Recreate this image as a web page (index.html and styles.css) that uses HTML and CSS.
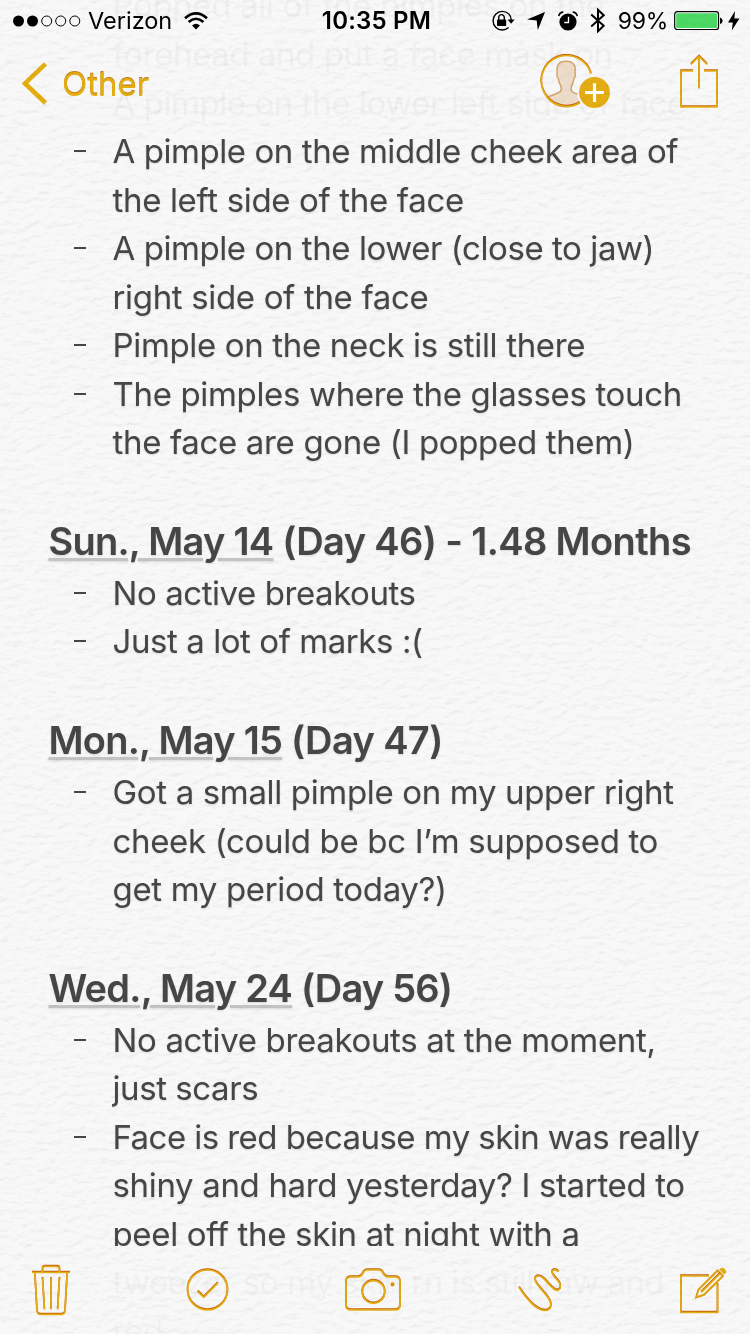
FILE: index.html
```html
<!DOCTYPE html>
<html lang="en">
<head>
    <meta charset="UTF-8">
    <meta name="viewport" content="width=device-width, initial-scale=1.0">
    <title>Notes</title>
    <link rel="stylesheet" href="styles.css">
</head>
<body>
    <div class="screen">
        <!-- Note text, scrolled under the two bars -->
        <main class="note">
            <ul class="list">
                <li class="item plain">
                    <span class="line">Popped all of the pimples on the</span>
                    <span class="line tight">forehead and put a face mask on</span>
                </li>
                <li class="item plain"><span class="line tight">A pimple on the lower left side of face</span></li>
                <li class="item">
                    <span class="line tight">A pimple on the middle cheek area of</span>
                    <span class="line">the left side of the face</span>
                </li>
                <li class="item">
                    <span class="line tight">A pimple on the lower (close to jaw)</span>
                    <span class="line">right side of the face</span>
                </li>
                <li class="item"><span class="line">Pimple on the neck is still there</span></li>
                <li class="item">
                    <span class="line">The pimples where the glasses touch</span>
                    <span class="line">the face are gone (I popped them)</span>
                </li>
            </ul>

            <h2 class="day"><span class="date">Sun., May 14</span> (Day 46) - 1.48 Months</h2>
            <ul class="list">
                <li class="item"><span class="line tight">No active breakouts</span></li>
                <li class="item"><span class="line tight">Just a lot of marks :(</span></li>
            </ul>

            <h2 class="day"><span class="date">Mon., May 15</span> (Day 47)</h2>
            <ul class="list">
                <li class="item">
                    <span class="line">Got a small pimple on my upper right</span>
                    <span class="line">cheek (could be bc I’m supposed to</span>
                    <span class="line">get my period today?)</span>
                </li>
            </ul>

            <h2 class="day day-tight"><span class="date">Wed., May 24</span> (Day 56)</h2>
            <ul class="list">
                <li class="item">
                    <span class="line">No active breakouts at the moment,</span>
                    <span class="line tight">just scars</span>
                </li>
                <li class="item">
                    <span class="line tighter">Face is red because my skin was really</span>
                    <span class="line">shiny and hard yesterday? I started to</span>
                    <span class="line">peel off the skin at night with a</span>
                    <span class="line tighter">tweezer so my skin rn is still raw and</span>
                    <span class="line">red</span>
                </li>
            </ul>
        </main>

        <!-- Status bar and navigation -->
        <header class="top">
            <div class="status">
                <div class="status-left">
                    <svg class="signal" width="68" height="12" viewBox="0 0 68 12">
                        <circle cx="5.5" cy="6" r="5.5"/>
                        <circle cx="19.5" cy="6" r="5.5"/>
                        <g fill="none" stroke="#000" stroke-width="1">
                            <circle cx="33.7" cy="6" r="5"/>
                            <circle cx="47.7" cy="6" r="5"/>
                            <circle cx="61.8" cy="6" r="5"/>
                        </g>
                    </svg>
                    <span class="carrier">Verizon</span>
                    <svg class="wifi" width="24" height="18" viewBox="0 0 24 18">
                        <g fill="none" stroke="#000" stroke-width="2.6">
                            <path d="M1 6.2Q12-3.4 23 6.2"/>
                            <path d="M4.6 9.9Q12 3.6 19.4 9.9"/>
                        </g>
                        <path d="M8 13.4Q12 10.2 16 13.4L12 17.4Z"/>
                    </svg>
                </div>
                <span class="clock">10:35 PM</span>
                <div class="status-right">
                    <svg width="24" height="22" viewBox="0 0 24 22">
                        <path d="M17.6 3.8A9.3 9.3 0 1 0 17.6 17.6" fill="none" stroke="#000" stroke-width="1.4"/>
                        <path d="M17.6 3.8Q20.4 6.5 20.2 10" fill="none" stroke="#000" stroke-width="1.4"/>
                        <path d="M16.6 9.6H23.6L20.1 13.8Z"/>
                        <rect x="6" y="9.6" width="9.2" height="6.4" rx=".8"/>
                        <path d="M7.7 10V7.4a2.8 2.8 0 0 1 5.6 0V10" fill="none" stroke="#000" stroke-width="1.4"/>
                    </svg>
                    <svg class="arrow" width="18" height="18" viewBox="0 0 18 18"><path d="M18 0L10.8 18L9.7 8.6L0 7.6Z"/></svg>
                    <svg class="alarm" width="20" height="20" viewBox="0 0 20 20">
                        <circle cx="10" cy="11" r="8.6"/>
                        <path d="M.7 5.2A5 5 0 0 1 5.3 1.1M19.3 5.2A5 5 0 0 0 14.7 1.1" fill="none" stroke="#000" stroke-width="1.6"/>
                        <path d="M10.5 5.8V11.5H6.2" fill="none" stroke="#fff" stroke-width="1.3"/>
                    </svg>
                    <svg class="bluetooth" width="16" height="27" viewBox="0 0 16 27">
                        <path d="M1.2 7.6L13.7 18.8L8 24.2V2.8L13.7 8.2L1.2 19.4" fill="none" stroke="#000" stroke-width="2"/>
                    </svg>
                    <span class="percent">99%</span>
                    <svg class="battery" width="50" height="20" viewBox="0 0 50 20">
                        <rect x=".7" y=".7" width="43.8" height="17.8" rx="2.6" fill="#fff" stroke="#000" stroke-width="1.2"/>
                        <rect x="2.2" y="2.2" width="40.8" height="14.8" rx="1" fill="#4cd964"/>
                        <path d="M46 6.4Q48.6 7 48.6 9.7T46 13Z"/>
                    </svg>
                    <svg class="bolt" width="12" height="20" viewBox="0 0 12 20"><path d="M7 0L0 11.6H4.8L3.8 19.6L11.4 7.4H6.4Z"/></svg>
                </div>
            </div>
            <nav class="nav">
                <a class="back">
                    <svg width="27" height="43" viewBox="0 0 27 43"><path d="M24.5 1.9L4 21.4L24.5 41" fill="none" stroke="#e4ae12" stroke-width="4.6"/></svg>
                    <span class="back-label">Other</span>
                </a>
                <svg class="person" width="72" height="56" viewBox="0 0 72 56">
                    <path class="skin" d="M7.3 43.4C12 40.4 18 40.2 20.4 37.5C21.8 36 21.5 34 20.8 32C19.3 29.6 18.8 28 18.3 24.5C17 23.5 16.6 21 17.2 18C16.2 11.5 18.5 7.2 26 7.2C34 7.2 36 12 35 18C35.7 21 35.3 23.4 34 24.5C33.5 28 33 29.6 31.6 32C31 34 30.8 36 32 37.5C34.5 40.2 39.8 39.6 44.7 43.4C34 56 17 56 7.3 43.4Z"/>
                    <path class="ring" d="M51 19.7A25.4 25.4 0 1 0 41 48"/>
                    <circle cx="54.5" cy="38.5" r="17.5" fill="#f7f7f7"/>
                    <circle cx="54.5" cy="38.5" r="15.4" fill="#e4ae12"/>
                    <path d="M54.5 29.2V47.9M45.1 38.5H63.9" stroke="#fff" stroke-width="3.2"/>
                </svg>
                <svg class="share" width="42" height="54" viewBox="0 0 42 54">
                    <path class="ring" d="M15 17H3V53H39V17H26M21 34.5V2.5M12.8 10.5L21 2.5L29.2 10.5"/>
                </svg>
            </nav>
        </header>

        <!-- Bottom toolbar -->
        <footer class="toolbar">
            <svg width="40" height="52" viewBox="0 0 40 52">
                <path class="ring" d="M1 8.5H39M3.8 8.5L6 47Q6.3 50.5 9.5 50.5H30.5Q33.7 50.5 34 47L36.2 8.5M11.5 8.5V5Q11.5 2.5 14 2.5H26Q28.5 2.5 28.5 5V8.5M11.5 14L13.4 45.5M20 14V45.5M28.5 14L26.6 45.5"/>
            </svg>
            <svg width="44" height="44" viewBox="0 0 44 44">
                <circle class="ring" cx="21.5" cy="22" r="20"/>
                <path class="ring" d="M11.7 23.4L17.7 29.3L31.8 15.2"/>
            </svg>
            <svg width="58" height="44" viewBox="-1 0 58 44">
                <path class="ring" d="M6 9H13Q15.5 9 17 6.8L18.8 3.8Q19.8 2 22 2H34Q36 2 37.2 3.8L39 6.8Q40.5 9 43 9H50Q55 9 55 14V37Q55 42 50 42H6Q1 42 1 37V14Q1 9 6 9Z"/>
                <circle class="ring" cx="28.5" cy="24" r="11.3"/>
                <circle cx="47.5" cy="16.4" r="2.1" fill="#d99400"/>
            </svg>
            <svg width="44" height="44" viewBox="-1 0 44 44">
                <path class="ring" d="M1 19.5C7 29 18 42.5 27 42.5C31.5 42.5 34 39 32.5 34.5C30 26 17.5 18 17 11.5C17 7 22 7 25.5 10.5C31 15 34 22 39 22.3C42 22.3 43.2 19.5 42 16C40 11 34 8 34 4C34.5 1.2 39 1.2 40.3 4"/>
            </svg>
            <svg class="compose" width="48" height="48" viewBox="0 0 48 48">
                <path class="ring" d="M30 10H2V46.5H38.5V18"/>
                <path class="pencil" d="M17 31.5L19.5 23.5L38.5 4.5L44 10L25 28.8Z"/>
                <path class="ring" d="M22.2 26.3L41.2 7.3"/>
                <path d="M40 3.5Q43 .3 46 3.3T45 8.5Z" fill="#e4ae12"/>
            </svg>
        </footer>

        <!-- Paper grain over the whole screen -->
        <svg class="paper" width="750" height="1334">
            <filter id="grain" x="0" y="0" width="100%" height="100%" color-interpolation-filters="sRGB">
                <feTurbulence type="fractalNoise" baseFrequency=".09 .16" numOctaves="3" seed="8"/>
                <feDiffuseLighting lighting-color="#fff" surfaceScale=".24" diffuseConstant="1.13">
                    <feDistantLight azimuth="250" elevation="62"/>
                </feDiffuseLighting>
            </filter>
            <rect width="750" height="1334" filter="url(#grain)"/>
        </svg>
    </div>
</body>
</html>
```
FILE: styles.css
```css
* {
    box-sizing: border-box;
}

body {
    margin: 0;
    background-color: #f8f8f8;
    font-family: 'Inter', sans-serif;
    color: #464646;
}

.screen {
    position: relative;
    width: 750px;
    height: 1334px;
    overflow: hidden;
}

/* Note */
.note {
    margin-top: -18.6px;
    padding-left: 48.5px;
    text-shadow: 0 1px 2px rgba(0, 0, 0, 0.12);
}

.list {
    margin: 0 0 48.5px;
    padding: 0;
    list-style: none;
}

.item {
    display: grid;
    grid-template-columns: 25px 39px auto;
}

.item::before {
    content: "";
    grid-column: 2;
    grid-row: 1;
    width: 12px;
    height: 2px;
    margin-top: 23px;
    background-color: #464646;
}

.plain::before {
    visibility: hidden;
}

.line {
    grid-column: 3;
    height: 48.55px;
    font-size: 33px;
    line-height: 48.55px;
    letter-spacing: -0.34px;
    white-space: nowrap;
}

.tight {
    letter-spacing: -0.43px;
}

.tighter {
    letter-spacing: -0.56px;
}

.day {
    margin: 0;
    height: 53.5px;
    font-size: 38px;
    font-weight: 600;
    line-height: 53.5px;
    letter-spacing: -0.62px;
    white-space: nowrap;
}

.day-tight {
    letter-spacing: -0.78px;
}

.date {
    letter-spacing: -0.75px;
    text-decoration: underline;
    text-decoration-color: #c4c4c4;
    text-decoration-thickness: 3px;
    text-underline-offset: 3px;
}

/* Status bar and navigation */
.top {
    position: absolute;
    top: 0;
    left: 0;
    width: 100%;
    height: 128px;
    background-color: rgba(248, 248, 248, 0.955);
}

.status {
    display: grid;
    grid-template-columns: 1fr auto 1fr;
    align-items: center;
    height: 41px;
    padding: 0 10px 0 13px;
    font-size: 23.5px;
    color: #000;
}

.status-left,
.status-right {
    display: flex;
    align-items: center;
}

.status-right {
    justify-content: flex-end;
}

.carrier {
    margin: 0 12px 0 7px;
}

.clock {
    font-size: 24px;
    font-weight: 600;
    letter-spacing: 0.2px;
}

.arrow {
    margin-left: 12px;
}

.alarm {
    margin-left: 13px;
}

.bluetooth {
    margin-left: 12px;
}

.percent {
    margin: 0 6px 0 12px;
    font-size: 23px;
    letter-spacing: -0.3px;
}

.bolt {
    margin-left: 4px;
}

.nav {
    display: flex;
    align-items: flex-start;
    padding: 13px 30px 0 21px;
}

.back {
    display: flex;
    align-items: center;
    gap: 14px;
    margin-top: 8px;
    font-size: 33px;
    line-height: 43px;
    color: #e4ae12;
    text-shadow: 0 -1px 0 #c87a10;
}

.back-label {
    padding-top: 2px;
    line-height: 41px;
}

.person {
    margin-left: auto;
    margin-right: 66px;
}

.ring {
    fill: none;
    stroke: #e4ae12;
    stroke-width: 1.7;
    filter: drop-shadow(0 -0.5px 0 #c8640c);
}

.skin {
    fill: #ecdcc9;
    stroke: #d3a668;
    stroke-width: 1.5;
}

/* Bottom toolbar */
.toolbar {
    position: absolute;
    bottom: 0;
    left: 0;
    display: flex;
    align-items: center;
    justify-content: space-between;
    width: 100%;
    height: 88px;
    padding: 0 23px 1px 31px;
    background-color: rgba(248, 248, 248, 0.965);
}

.compose {
    margin-left: 4px;
}

.pencil {
    fill: #f8f8f8;
    stroke: #dda010;
    stroke-width: 2;
}

/* Paper */
.paper {
    position: absolute;
    top: 0;
    left: 0;
    mix-blend-mode: multiply;
    pointer-events: none;
}
```
